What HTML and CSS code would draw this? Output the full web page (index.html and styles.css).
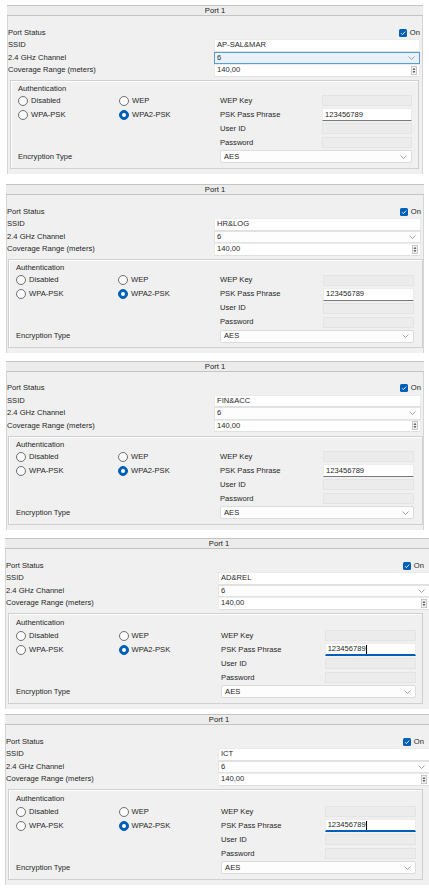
FILE: index.html
```html
<!DOCTYPE html>
<html lang="en">
<head>
<meta charset="utf-8">
<title>Wireless ports</title>
<link rel="stylesheet" href="styles.css">
</head>
<body>
<main class="page">

  <!-- Panel 1 -->
  <section class="panel panel--p1">
    <div class="panel-head">Port 1</div>
    <div class="settings">
      <span class="lbl">Port Status</span>
      <span class="check"><svg class="box" viewBox="0 0 8 8" width="8" height="8"><rect width="8" height="8" rx="1.5" fill="#005fb8"/><path d="M2 4.2 L3.4 5.6 L6.2 2.6" fill="none" stroke="#fff" stroke-width="0.9"/></svg>On</span>
      <span class="lbl">SSID</span>
      <div class="field text">AP-SAL&amp;MAR</div>
      <span class="lbl">2.4 GHz Channel</span>
      <div class="field select focus">6<svg class="chev" viewBox="0 0 7 4" width="7" height="4"><path d="M0.5 0.5 L3.5 3.5 L6.5 0.5" fill="none" stroke="#8a8a8a" stroke-width="0.8"/></svg></div>
      <span class="lbl">Coverage Range (meters)</span>
      <div class="field text">140,00<span class="spin"><svg viewBox="0 0 5 9" width="5" height="9"><path d="M2.5 1.2 L4.3 3.6 L0.7 3.6Z M2.5 7.8 L4.3 5.4 L0.7 5.4Z" fill="#333"/></svg></span></div>
    </div>
    <div class="group">
      <div class="auth-title">Authentication</div>
      <div class="grid">
        <div class="pair"><span class="radio"><span class="dot"></span>Disabled</span><span class="radio"><span class="dot"></span>WEP</span></div>
        <span class="lbl">WEP Key</span><div class="field off"></div>
        <div class="pair"><span class="radio"><span class="dot"></span>WPA-PSK</span><span class="radio"><span class="dot on"></span>WPA2-PSK</span></div>
        <span class="lbl">PSK Pass Phrase</span><div class="field psk">123456789</div>
        <span class="blank"></span>
        <span class="lbl">User ID</span><div class="field off"></div>
        <span class="blank"></span>
        <span class="lbl">Password</span><div class="field off"></div>
        <span class="lbl">Encryption Type</span>
        <div class="field combo">AES<svg class="chev" viewBox="0 0 7 4" width="7" height="4"><path d="M0.5 0.5 L3.5 3.5 L6.5 0.5" fill="none" stroke="#8a8a8a" stroke-width="0.8"/></svg></div>
      </div>
    </div>
  </section>

  <!-- Panel 2 -->
  <section class="panel panel--p2">
    <div class="panel-head">Port 1</div>
    <div class="settings">
      <span class="lbl">Port Status</span>
      <span class="check"><svg class="box" viewBox="0 0 8 8" width="8" height="8"><rect width="8" height="8" rx="1.5" fill="#005fb8"/><path d="M2 4.2 L3.4 5.6 L6.2 2.6" fill="none" stroke="#fff" stroke-width="0.9"/></svg>On</span>
      <span class="lbl">SSID</span>
      <div class="field text">HR&amp;LOG</div>
      <span class="lbl">2.4 GHz Channel</span>
      <div class="field select">6<svg class="chev" viewBox="0 0 7 4" width="7" height="4"><path d="M0.5 0.5 L3.5 3.5 L6.5 0.5" fill="none" stroke="#8a8a8a" stroke-width="0.8"/></svg></div>
      <span class="lbl">Coverage Range (meters)</span>
      <div class="field text">140,00<span class="spin"><svg viewBox="0 0 5 9" width="5" height="9"><path d="M2.5 1.2 L4.3 3.6 L0.7 3.6Z M2.5 7.8 L4.3 5.4 L0.7 5.4Z" fill="#333"/></svg></span></div>
    </div>
    <div class="group">
      <div class="auth-title">Authentication</div>
      <div class="grid">
        <div class="pair"><span class="radio"><span class="dot"></span>Disabled</span><span class="radio"><span class="dot"></span>WEP</span></div>
        <span class="lbl">WEP Key</span><div class="field off"></div>
        <div class="pair"><span class="radio"><span class="dot"></span>WPA-PSK</span><span class="radio"><span class="dot on"></span>WPA2-PSK</span></div>
        <span class="lbl">PSK Pass Phrase</span><div class="field psk">123456789</div>
        <span class="blank"></span>
        <span class="lbl">User ID</span><div class="field off"></div>
        <span class="blank"></span>
        <span class="lbl">Password</span><div class="field off"></div>
        <span class="lbl">Encryption Type</span>
        <div class="field combo">AES<svg class="chev" viewBox="0 0 7 4" width="7" height="4"><path d="M0.5 0.5 L3.5 3.5 L6.5 0.5" fill="none" stroke="#8a8a8a" stroke-width="0.8"/></svg></div>
      </div>
    </div>
  </section>

  <!-- Panel 3 -->
  <section class="panel panel--p3">
    <div class="panel-head">Port 1</div>
    <div class="settings">
      <span class="lbl">Port Status</span>
      <span class="check"><svg class="box" viewBox="0 0 8 8" width="8" height="8"><rect width="8" height="8" rx="1.5" fill="#005fb8"/><path d="M2 4.2 L3.4 5.6 L6.2 2.6" fill="none" stroke="#fff" stroke-width="0.9"/></svg>On</span>
      <span class="lbl">SSID</span>
      <div class="field text">FIN&amp;ACC</div>
      <span class="lbl">2.4 GHz Channel</span>
      <div class="field select">6<svg class="chev" viewBox="0 0 7 4" width="7" height="4"><path d="M0.5 0.5 L3.5 3.5 L6.5 0.5" fill="none" stroke="#8a8a8a" stroke-width="0.8"/></svg></div>
      <span class="lbl">Coverage Range (meters)</span>
      <div class="field text">140,00<span class="spin"><svg viewBox="0 0 5 9" width="5" height="9"><path d="M2.5 1.2 L4.3 3.6 L0.7 3.6Z M2.5 7.8 L4.3 5.4 L0.7 5.4Z" fill="#333"/></svg></span></div>
    </div>
    <div class="group">
      <div class="auth-title">Authentication</div>
      <div class="grid">
        <div class="pair"><span class="radio"><span class="dot"></span>Disabled</span><span class="radio"><span class="dot"></span>WEP</span></div>
        <span class="lbl">WEP Key</span><div class="field off"></div>
        <div class="pair"><span class="radio"><span class="dot"></span>WPA-PSK</span><span class="radio"><span class="dot on"></span>WPA2-PSK</span></div>
        <span class="lbl">PSK Pass Phrase</span><div class="field psk">123456789</div>
        <span class="blank"></span>
        <span class="lbl">User ID</span><div class="field off"></div>
        <span class="blank"></span>
        <span class="lbl">Password</span><div class="field off"></div>
        <span class="lbl">Encryption Type</span>
        <div class="field combo">AES<svg class="chev" viewBox="0 0 7 4" width="7" height="4"><path d="M0.5 0.5 L3.5 3.5 L6.5 0.5" fill="none" stroke="#8a8a8a" stroke-width="0.8"/></svg></div>
      </div>
    </div>
  </section>

  <!-- Panel 4 -->
  <section class="panel panel--wide panel--p4">
    <div class="panel-head">Port 1</div>
    <div class="settings">
      <span class="lbl">Port Status</span>
      <span class="check"><svg class="box" viewBox="0 0 8 8" width="8" height="8"><rect width="8" height="8" rx="1.5" fill="#005fb8"/><path d="M2 4.2 L3.4 5.6 L6.2 2.6" fill="none" stroke="#fff" stroke-width="0.9"/></svg>On</span>
      <span class="lbl">SSID</span>
      <div class="field text">AD&amp;REL</div>
      <span class="lbl">2.4 GHz Channel</span>
      <div class="field select">6<svg class="chev" viewBox="0 0 7 4" width="7" height="4"><path d="M0.5 0.5 L3.5 3.5 L6.5 0.5" fill="none" stroke="#8a8a8a" stroke-width="0.8"/></svg></div>
      <span class="lbl">Coverage Range (meters)</span>
      <div class="field text">140,00<span class="spin"><svg viewBox="0 0 5 9" width="5" height="9"><path d="M2.5 1.2 L4.3 3.6 L0.7 3.6Z M2.5 7.8 L4.3 5.4 L0.7 5.4Z" fill="#333"/></svg></span></div>
    </div>
    <div class="group">
      <div class="auth-title">Authentication</div>
      <div class="grid">
        <div class="pair"><span class="radio"><span class="dot"></span>Disabled</span><span class="radio"><span class="dot"></span>WEP</span></div>
        <span class="lbl">WEP Key</span><div class="field off"></div>
        <div class="pair"><span class="radio"><span class="dot"></span>WPA-PSK</span><span class="radio"><span class="dot on"></span>WPA2-PSK</span></div>
        <span class="lbl">PSK Pass Phrase</span><div class="field psk active">123456789<span class="caret"></span></div>
        <span class="blank"></span>
        <span class="lbl">User ID</span><div class="field off"></div>
        <span class="blank"></span>
        <span class="lbl">Password</span><div class="field off"></div>
        <span class="lbl">Encryption Type</span>
        <div class="field combo">AES<svg class="chev" viewBox="0 0 7 4" width="7" height="4"><path d="M0.5 0.5 L3.5 3.5 L6.5 0.5" fill="none" stroke="#8a8a8a" stroke-width="0.8"/></svg></div>
      </div>
    </div>
  </section>

  <!-- Panel 5 -->
  <section class="panel panel--wide panel--p5">
    <div class="panel-head">Port 1</div>
    <div class="settings">
      <span class="lbl">Port Status</span>
      <span class="check"><svg class="box" viewBox="0 0 8 8" width="8" height="8"><rect width="8" height="8" rx="1.5" fill="#005fb8"/><path d="M2 4.2 L3.4 5.6 L6.2 2.6" fill="none" stroke="#fff" stroke-width="0.9"/></svg>On</span>
      <span class="lbl">SSID</span>
      <div class="field text">ICT</div>
      <span class="lbl">2.4 GHz Channel</span>
      <div class="field select">6<svg class="chev" viewBox="0 0 7 4" width="7" height="4"><path d="M0.5 0.5 L3.5 3.5 L6.5 0.5" fill="none" stroke="#8a8a8a" stroke-width="0.8"/></svg></div>
      <span class="lbl">Coverage Range (meters)</span>
      <div class="field text">140,00<span class="spin"><svg viewBox="0 0 5 9" width="5" height="9"><path d="M2.5 1.2 L4.3 3.6 L0.7 3.6Z M2.5 7.8 L4.3 5.4 L0.7 5.4Z" fill="#333"/></svg></span></div>
    </div>
    <div class="group">
      <div class="auth-title">Authentication</div>
      <div class="grid">
        <div class="pair"><span class="radio"><span class="dot"></span>Disabled</span><span class="radio"><span class="dot"></span>WEP</span></div>
        <span class="lbl">WEP Key</span><div class="field off"></div>
        <div class="pair"><span class="radio"><span class="dot"></span>WPA-PSK</span><span class="radio"><span class="dot on"></span>WPA2-PSK</span></div>
        <span class="lbl">PSK Pass Phrase</span><div class="field psk active">123456789<span class="caret"></span></div>
        <span class="blank"></span>
        <span class="lbl">User ID</span><div class="field off"></div>
        <span class="blank"></span>
        <span class="lbl">Password</span><div class="field off"></div>
        <span class="lbl">Encryption Type</span>
        <div class="field combo">AES<svg class="chev" viewBox="0 0 7 4" width="7" height="4"><path d="M0.5 0.5 L3.5 3.5 L6.5 0.5" fill="none" stroke="#8a8a8a" stroke-width="0.8"/></svg></div>
      </div>
    </div>
  </section>

</main>
</body>
</html>
```

FILE: styles.css
```css
* { box-sizing: border-box; }

html, body {
  margin: 0;
  background: #ffffff;
}

body {
  font-family: "Liberation Sans", Arial, sans-serif;
  font-size: 7.6px;
  color: #1f1f1f;
  overflow: hidden;
}

.page {
  display: flex;
  flex-direction: column;
  align-items: flex-start;
  padding-top: 5px;
}

/* ---------- panel ---------- */
.panel {
  background: #f0f0f0;
  border-left: 1px solid #d6d6d6;
  border-right: 1px solid #d6d6d6;
  padding-bottom: 5px;
  flex-shrink: 0;
}

.panel--p1 { margin-left: 7px; width: 416px; }
.panel--p2 { margin-left: 6px; width: 418px; margin-top: 10.5px; }
.panel--p3 { margin-left: 6px; width: 418px; margin-top: 7.5px; }
.panel--p4 { margin-left: 5px; width: 428px; margin-top: 8.5px; }
.panel--p5 { margin-left: 5px; width: 428px; margin-top: 5.5px; }

.panel-head {
  height: 11px;
  margin: 0 -1px;
  background: #ececec;
  border-top: 1px solid #c4c4c4;
  border-bottom: 1px solid #c4c4c4;
  text-align: center;
  line-height: 9px;
  color: #202020;
}

/* ---------- top settings ---------- */
.settings {
  display: grid;
  grid-template-columns: 1fr 1fr;
  grid-template-rows: 13px 12.5px 12.5px 12.5px;
  align-items: center;
  padding: 10px 2px 0 0;
}

.lbl {
  white-space: nowrap;
  line-height: 10px;
}

.check {
  justify-self: end;
  display: flex;
  align-items: center;
  gap: 3px;
  line-height: 10px;
}

.panel--wide .check { margin-right: 6px; }

.box { display: block; }

.field {
  display: flex;
  align-items: center;
  padding-left: 2px;
  line-height: 10px;
  white-space: nowrap;
}

.settings .field {
  align-self: stretch;
}

.field.text {
  background: #ffffff;
  border: 1px solid #ebebeb;
  border-bottom-color: #e0e0e0;
}

.field.select {
  background: #fdfdfd;
  border: 1px solid #e2e2e2;
}

.field.select.focus {
  background: #e9f1fa;
  border-color: #5b9bd8;
}

.chev {
  margin-left: auto;
  margin-right: 4px;
  display: block;
}

.spin {
  margin-left: auto;
  margin-right: 2px;
  width: 6px;
  height: 9px;
  display: flex;
  align-items: center;
  justify-content: center;
  background: #f4f4f4;
  border: 1px solid #c8c8c8;
}

.spin svg { display: block; width: 4px; height: 7px; }

/* ---------- authentication group ---------- */
.group {
  margin: 3px 3px 0 2px;
  border: 1px solid #d0d0d0;
  box-shadow: inset 1px 1px 0 #ffffff;
  padding: 3px 6px 4px 7px;
}

.panel--p2 .group,
.panel--p3 .group { margin: 3.5px 0 0 1px; padding: 3px 8px 4px 7px; }

.panel--wide .group { margin: 3px 9px 0 2px; padding: 4px 6px 4px 7px; }

.auth-title {
  height: 10px;
  line-height: 10px;
}

.panel--wide .auth-title { height: 11px; }

.grid {
  display: grid;
  grid-template-columns: 202fr 102fr 90fr;
  grid-auto-rows: 14px;
  align-items: center;
}

.pair {
  display: grid;
  grid-template-columns: 1fr 1fr;
  align-items: center;
}

.radio {
  display: flex;
  align-items: center;
  gap: 3px;
  line-height: 10px;
}

.dot {
  width: 10px;
  height: 10px;
  border-radius: 50%;
  border: 1px solid #707070;
  background: #fbfbfb;
  display: flex;
  align-items: center;
  justify-content: center;
  flex-shrink: 0;
}

.dot.on {
  background: #005fb8;
  border-color: #005fb8;
}

.dot.on::after {
  content: "";
  width: 4px;
  height: 4px;
  border-radius: 50%;
  background: #ffffff;
}

.field.off {
  height: 11px;
  background: #ececec;
  border: 1px solid #e4e4e4;
}

.field.psk {
  height: 13px;
  background: #ffffff;
  border: 1px solid #ececec;
  border-bottom: 1px solid #7a7a7a;
}

.field.psk.active {
  border-bottom: 2px solid #005fb8;
}

.caret {
  width: 1px;
  height: 9px;
  background: #000;
  margin-left: 0.5px;
}

.field.combo {
  grid-column: 2 / 4;
  height: 13px;
  padding-left: 3px;
  background: #fdfdfd;
  border: 1px solid #dcdcdc;
  border-radius: 2px;
}
```
